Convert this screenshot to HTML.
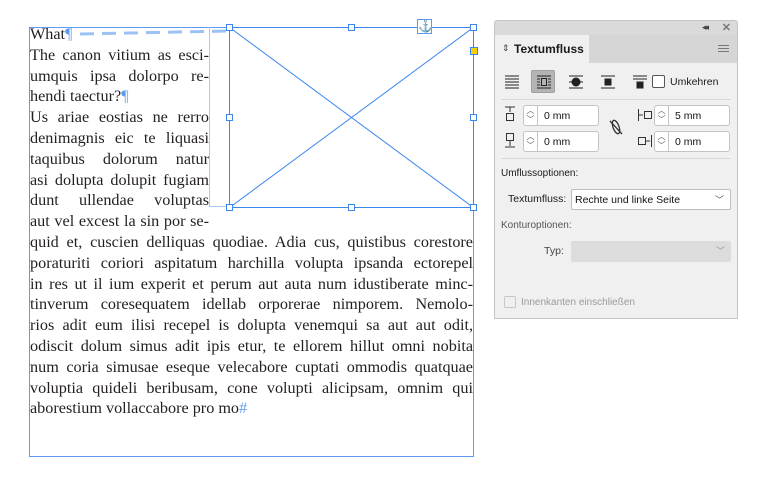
<!DOCTYPE html>
<html><head><meta charset="utf-8"><style>
*{margin:0;padding:0;box-sizing:border-box}
body{width:759px;height:493px;background:#fff;position:relative;overflow:hidden;font-family:"Liberation Sans",sans-serif}
.ln{position:absolute;left:30px;height:20.8px;line-height:20.8px;font-family:"Liberation Serif",serif;font-size:16.2px;color:#231f20;white-space:nowrap;text-align:justify;text-align-last:justify}
.n{text-align-last:left}
.s{width:179px}.f{width:443px}
.b{color:#5a9bf0}
.h{position:absolute;width:7px;height:7px;border:1px solid #3c86ee;background:#fff}
.p{position:absolute;font-size:11px;color:#1a1a1a}
.fld{position:absolute;height:21px;border:1px solid #c4c4c4;border-radius:3px;background:#fff;font-size:10.5px;color:#111}
.fld .sp{position:absolute;left:0;top:0;width:14px;height:19px;border-right:1px solid #c4c4c4;font-size:8px;color:#555;text-align:center;line-height:9px}
.fld .v{position:absolute;left:20px;top:4px}
</style></head><body>
<div style="position:absolute;left:29px;top:27px;width:445px;height:430px;border:1px solid #5b9af0"></div>
<div style="position:absolute;left:209px;top:27px;width:20px;height:180px;border-bottom:1px solid #a8c8f5;border-left:1px solid #a8c8f5"></div>
<div style="position:absolute;left:229px;top:27px;width:245px;height:181px;border:1px solid #3c86ee;background:#fff"></div>
<svg style="position:absolute;left:229px;top:27px" width="245" height="181"><line x1="0" y1="0" x2="245" y2="181" stroke="#3c86ee" stroke-width="1"/><line x1="245" y1="0" x2="0" y2="181" stroke="#3c86ee" stroke-width="1"/></svg>
<div class="h" style="left:226px;top:24px"></div><div class="h" style="left:348px;top:24px"></div><div class="h" style="left:470px;top:24px"></div>
<div class="h" style="left:226px;top:114px"></div><div class="h" style="left:470px;top:114px"></div>
<div class="h" style="left:226px;top:204px"></div><div class="h" style="left:348px;top:204px"></div><div class="h" style="left:470px;top:204px"></div>
<div class="h" style="left:470px;top:47px;background:#f7d000;border-color:#3c86ee;width:8px;height:8px"></div>
<div style="position:absolute;left:417px;top:19px;width:15px;height:15px;border:1px solid #5b9af0;background:#fff;color:#8ab4f3;font-size:12px;text-align:center;line-height:13px">⚓</div>
<svg style="position:absolute;left:60px;top:28px" width="170" height="12"><line x1="20" y1="6" x2="168" y2="3" stroke="#9cc2f5" stroke-width="3" stroke-dasharray="14,8"/></svg>
<div class="ln n" style="top:24px">What<span class="b">¶</span></div>
<div class="ln s" style="top:44.8px">The canon vitium as esci-</div>
<div class="ln s" style="top:65.6px">umquis ipsa dolorpo re-</div>
<div class="ln n" style="top:86.4px">hendi taectur?<span class="b">¶</span></div>
<div class="ln s" style="top:107.2px">Us ariae eostias ne rerro</div>
<div class="ln s" style="top:128px">denimagnis eic te liquasi</div>
<div class="ln s" style="top:148.8px">taquibus dolorum natur</div>
<div class="ln s" style="top:169.6px">asi dolupta dolupit fugiam</div>
<div class="ln s" style="top:190.4px">dunt ullendae voluptas</div>
<div class="ln s" style="top:211.2px">aut vel excest la sin por se-</div>
<div class="ln f" style="top:232px">quid et, cuscien delliquas quodiae. Adia cus, quistibus corestore</div>
<div class="ln f" style="top:252.8px">poraturiti coriori aspitatum harchilla volupta ipsanda ectorepel</div>
<div class="ln f" style="top:273.6px">in res ut il ium experit et perum aut auta num idustiberate minc-</div>
<div class="ln f" style="top:294.4px">tinverum coresequatem idellab orporerae nimporem. Nemolo-</div>
<div class="ln f" style="top:315.2px">rios adit eum ilisi recepel is dolupta venemqui sa aut aut odit,</div>
<div class="ln f" style="top:336px">odiscit dolum simus adit ipis etur, te ellorem hillut omni nobita</div>
<div class="ln f" style="top:356.8px">num coria simusae eseque velecabore cuptati ommodis quatquae</div>
<div class="ln f" style="top:377.6px">voluptia quideli beribusam, cone volupti alicipsam, omnim qui</div>
<div class="ln n" style="top:398.4px">aborestium vollaccabore pro mo<span class="b">#</span></div>
<div style="position:absolute;left:494px;top:20px;width:244px;height:299px;background:#f0f0f0;border:1px solid #c4c4c4;border-radius:3px 3px 0 0;overflow:hidden">
 <div style="position:absolute;left:0;top:0;width:244px;height:14px;background:#dadada"></div>
 <div style="position:absolute;right:30px;top:1px;font-size:9px;color:#444;letter-spacing:-2px">◂◂</div>
 <div style="position:absolute;right:6px;top:0px;font-size:11px;color:#777;font-weight:bold">✕</div>
 <div style="position:absolute;left:0;top:14px;width:244px;height:28px;background:#d6d6d6"></div>
 <div style="position:absolute;left:0;top:14px;width:94px;height:28px;background:#f0f0f0"></div>
 <div style="position:absolute;left:7px;top:22px;font-size:9px;color:#444">⇕</div>
 <div style="position:absolute;left:19px;top:21px;font-size:12px;font-weight:bold;color:#1a1a1a">Textumfluss</div>
 <div style="position:absolute;right:8px;top:24px;width:11px;height:7px;border-top:1px solid #777;border-bottom:1px solid #777"><div style="margin-top:2px;border-top:1px solid #777"></div></div>
 <div style="position:absolute;left:36px;top:49px;width:24px;height:23px;background:#b4b4b4;border:1px solid #a0a0a0;border-radius:2px"></div>
 <svg style="position:absolute;left:6px;top:52px" width="160" height="18" stroke="#222" fill="none" stroke-width="1">
  <path d="M4 3h14M4 6h14M4 9h14M4 12h14M4 15h14"/>
  <path d="M36 3h14M36 15h14M36 6h3M36 9h3M36 12h3M47 6h3M47 9h3M47 12h3"/><rect x="40.5" y="5.5" width="5" height="7"/>
  <path d="M68 3h14M68 15h14M68 9h3M79 9h3"/><circle cx="75" cy="9" r="4" fill="#222"/>
  <path d="M100 3h14M100 15h14"/><rect x="104" y="6" width="6" height="6" fill="#222"/>
  <path d="M132 3h14M132 6h14"/><rect x="136" y="9" width="6" height="6" fill="#222"/>
 </svg>
 <div style="position:absolute;left:157px;top:54px;width:13px;height:13px;border:1px solid #555;border-radius:2px;background:#fff"></div>
 <div class="p" style="left:175px;top:55px;font-size:10.5px">Umkehren</div>
 <div style="position:absolute;left:6px;top:78px;width:230px;border-top:1px solid #d8d8d8"></div>
 <svg style="position:absolute;left:8px;top:85px" width="14" height="16" stroke="#333" fill="none"><path d="M2 1h10M7 1v5"/><rect x="3.5" y="7.5" width="7" height="7"/></svg>
 <svg style="position:absolute;left:8px;top:111px" width="14" height="16" stroke="#333" fill="none"><rect x="3.5" y="1.5" width="7" height="7"/><path d="M7 9v5M2 15h10"/></svg>
 <div class="fld" style="left:28px;top:84px;width:76px"><div class="sp">︿<br>﹀</div><div class="v">0 mm</div></div>
 <div class="fld" style="left:28px;top:110px;width:76px"><div class="sp">︿<br>﹀</div><div class="v">0 mm</div></div>
 <svg style="position:absolute;left:114px;top:97px" width="14" height="18" stroke="#333" fill="none" stroke-width="1.3"><ellipse cx="7" cy="9" rx="3" ry="7" transform="rotate(-20 7 9)"/><path d="M1 3l12 13"/></svg>
 <svg style="position:absolute;left:142px;top:87px" width="16" height="14" stroke="#333" fill="none"><path d="M1.5 1v12M2 7h4"/><rect x="7.5" y="3.5" width="7" height="7"/></svg>
 <svg style="position:absolute;left:142px;top:113px" width="16" height="14" stroke="#333" fill="none"><rect x="1.5" y="3.5" width="7" height="7"/><path d="M9 7h4M14.5 1v12"/></svg>
 <div class="fld" style="left:159px;top:84px;width:76px"><div class="sp">︿<br>﹀</div><div class="v">5 mm</div></div>
 <div class="fld" style="left:159px;top:110px;width:76px"><div class="sp">︿<br>﹀</div><div class="v">0 mm</div></div>
 <div style="position:absolute;left:6px;top:137px;width:230px;border-top:1px solid #d8d8d8"></div>
 <div class="p" style="left:6px;top:147px;font-size:10px">Umflussoptionen:</div>
 <div class="p" style="left:13px;top:172px;font-size:10.5px">Textumfluss:</div>
 <div style="position:absolute;left:76px;top:168px;width:160px;height:21px;border:1px solid #bdbdbd;border-radius:2px;background:#fff;font-size:10.5px;color:#111;padding:4px 0 0 3px">Rechte und linke Seite<span style="position:absolute;right:6px;top:3px;font-size:9px;color:#555">﹀</span></div>
 <div class="p" style="left:6px;top:199px;font-size:10px;color:#555">Konturoptionen:</div>
 <div class="p" style="left:49px;top:224px;font-size:10.5px;color:#444">Typ:</div>
 <div style="position:absolute;left:76px;top:220px;width:160px;height:21px;border-radius:2px;background:#dcdcdc"><span style="position:absolute;right:6px;top:3px;font-size:9px;color:#999">﹀</span></div>
 <div style="position:absolute;left:9px;top:275px;width:12px;height:12px;border:1px solid #c8c8c8;border-radius:2px"></div>
 <div class="p" style="left:26px;top:276px;font-size:10px;color:#9a9a9a">Innenkanten einschließen</div>
</div>
</body></html>
